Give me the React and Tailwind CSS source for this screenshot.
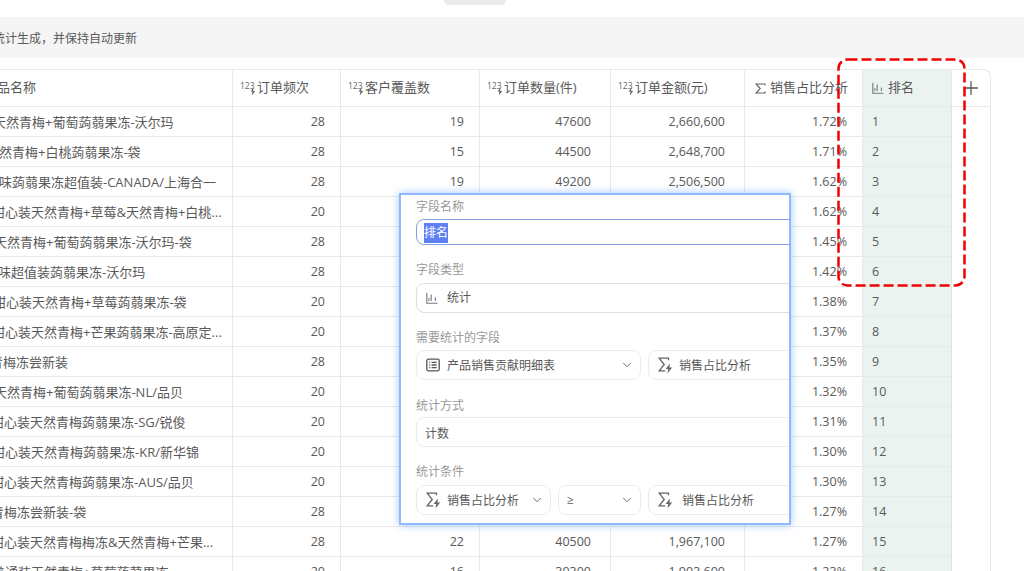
import { ChevronDown, Plus } from 'lucide-react';

const names = [
  ['pl-[33px]', '天然青梅+葡萄蒟蒻果冻-沃尔玛'],
  ['pl-[26px]', '天然青梅+白桃蒟蒻果冻-袋'],
  ['pl-[26px]', '一味蒟蒻果冻超值装-CANADA/上海合一'],
  ['pl-[32px]', '甜心装天然青梅+草莓&天然青梅+白桃...'],
  ['pl-[34px]', '天然青梅+葡萄蒟蒻果冻-沃尔玛-袋'],
  ['pl-[25px]', '一味超值装蒟蒻果冻-沃尔玛'],
  ['pl-[33px]', '甜心装天然青梅+草莓蒟蒻果冻-袋'],
  ['pl-[32px]', '甜心装天然青梅+芒果蒟蒻果冻-高原定...'],
  ['pl-[30px]', '青梅冻尝新装'],
  ['pl-[34px]', '天然青梅+葡萄蒟蒻果冻-NL/品贝'],
  ['pl-[31px]', '甜心装天然青梅蒟蒻果冻-SG/锐俊'],
  ['pl-[32px]', '甜心装天然青梅蒟蒻果冻-KR/新华锦'],
  ['pl-[31px]', '甜心装天然青梅蒟蒻果冻-AUS/品贝'],
  ['pl-[31px]', '青梅冻尝新装-袋'],
  ['pl-[31px]', '甜心装天然青梅梅冻&天然青梅+芒果...'],
  ['pl-[32px]', '普通装天然青梅+草莓蒟蒻果冻'],
];
const freq = [28, 28, 28, 20, 28, 28, 20, 20, 28, 20, 20, 20, 20, 28, 28, 20];
// rows 4-14 of these columns sit behind the dialog
const cover = { 0: 19, 1: 15, 2: 19, 14: 22, 15: 16 };
const qty = { 0: 47600, 1: 44500, 2: 49200, 14: 40500, 15: 39300 };
const amount = { 0: '2,660,600', 1: '2,648,700', 2: '2,506,500', 14: '1,967,100', 15: '1,903,600' };
const share = ['1.72', '1.71', '1.62', '1.62', '1.45', '1.42', '1.38', '1.37', '1.35', '1.32', '1.31', '1.30', '1.30', '1.27', '1.27', '1.23'];

const Bolt = ({ x = 0, y = 0 }) => (
  <path transform={`translate(${x} ${y})`} d="M3 0 0 4h1.9L1.3 8l3.4-4.6H2.7z" fill="currentColor" />
);

const NumIcon = () => (
  <svg width="16" height="16" viewBox="0 0 16 16" className="shrink-0 text-[#666]">
    <text x="0" y="9" fontSize="8.5" fill="currentColor" fontFamily="'Open Sans', sans-serif">123</text>
    <Bolt x={10.5} y={7.5} />
  </svg>
);

const SumIcon = () => (
  <svg width="11" height="11" viewBox="0 0 11 11" fill="none" stroke="#666" strokeWidth="1.2" className="shrink-0">
    <path d="M10 2.6V1H1l4.2 4.5L1 10h9V8.4" />
  </svg>
);

const SumBoltIcon = () => (
  <svg width="15" height="17" viewBox="0 0 15 17" fill="none" className="shrink-0 text-[#666]">
    <path d="M10.5 3.2V1.2H1.2l5 6.3-5 6.3h6" stroke="currentColor" strokeWidth="1.3" />
    <path d="M12 6.5 7.6 12h2.6l-.8 4.5 4.8-6h-2.8z" fill="currentColor" />
  </svg>
);

const ChartIcon = () => (
  <svg width="12" height="12" viewBox="0 0 12 12" fill="none" stroke="#777" strokeWidth="1.1" className="shrink-0">
    <path d="M.8.8v10.5h10.7M5.2 9V2.4M9.4 9V5.4M2.9 9V6" />
  </svg>
);

const TableIcon = () => (
  <svg width="14" height="14" viewBox="0 0 14 14" fill="none" stroke="#555" strokeWidth="1.3" className="shrink-0">
    <rect x=".8" y="1.2" width="12.4" height="11.6" rx="1.5" />
    <path d="M3.2 4.4h1M5.6 4.4h5M3.2 7h1M5.6 7h5M3.2 9.6h1M5.6 9.6h5" />
  </svg>
);

function Head({ width, children, className = '' }) {
  return (
    <div className={`flex h-full shrink-0 items-center border-r border-[#e8e8e8] ${width} ${className}`}>
      {children}
    </div>
  );
}

function Num({ width, pad, children }) {
  return (
    <div className={`flex h-full shrink-0 items-center justify-end border-r border-[#e8e8e8] pt-[2px] text-[12.5px] ${width} ${pad}`}>
      {children}
    </div>
  );
}

function Select({ width, children, chevron, pad = 'pl-[9px]', border = 'border-[#ececec]' }) {
  return (
    <div className={`flex h-[30px] shrink-0 items-center rounded-lg border bg-white ${width} ${pad} ${border}`}>
      {children}
      {chevron && <ChevronDown size={14} strokeWidth={1.6} className="ml-auto mr-[6px] text-[#666]" />}
    </div>
  );
}

const Label = ({ className, children }) => (
  <div className={`h-4 pt-px text-xs leading-4 text-[#999] ${className}`}>{children}</div>
);

export default function App() {
  return (
    <div className="relative h-[571px] w-[1024px] overflow-hidden bg-white font-['Open_Sans','Noto_Sans_CJK_SC',sans-serif] text-[13px] text-[#595959]">
      {/* top tab */}
      <div className="flex h-[17px] justify-center pr-[74px]">
        <div className="h-[5px] w-[62px] rounded-b-md bg-[#ebebeb]" />
      </div>

      {/* banner */}
      <div className="flex h-[41px] items-center overflow-hidden bg-[#f5f5f5] pt-[2px] text-xs">
        <span className="-ml-[7px] whitespace-nowrap">统计生成，并保持自动更新</span>
      </div>

      {/* table */}
      <div className="mt-[11px] -ml-[40px] w-[1031px] rounded-tr-lg border-t border-r border-[#e8e8e8]">
        <div className="flex h-[37px] border-b border-[#e8e8e8]">
          <Head width="w-[273px]" className="pl-[24px]">产品名称</Head>
          <Head width="w-[108px]" className="gap-px pl-[7px]"><NumIcon />订单频次</Head>
          <Head width="w-[139px]" className="gap-px pl-[7px]"><NumIcon />客户覆盖数</Head>
          <Head width="w-[131px]" className="gap-px pl-[7px]"><NumIcon />订单数量(件)</Head>
          <Head width="w-[134px]" className="gap-px pl-[7px]"><NumIcon />订单金额(元)</Head>
          <Head width="w-[118px]" className="gap-[4px] pl-[10px]"><SumIcon />销售占比分析</Head>
          <Head width="w-[89px]" className="gap-[4px] border-[#dde5e2] bg-[#ebf3f0] pl-[9px]"><ChartIcon />排名</Head>
          <div className="flex w-[39px] items-center pl-[8px]">
            <Plus size={22} strokeWidth={1.4} className="text-[#555]" />
          </div>
        </div>

        {names.map(([indent, name], i) => (
          <div key={name} className="flex h-[30px]">
            <div className="flex h-full border-b border-[#e8e8e8]">
              <div className={`flex h-full w-[273px] shrink-0 items-center overflow-hidden whitespace-nowrap border-r border-[#e8e8e8] pt-[2px] ${indent}`}>
                {name}
              </div>
              <Num width="w-[108px]" pad="pr-[15px]">{freq[i]}</Num>
              <Num width="w-[139px]" pad="pr-[15px]">{cover[i]}</Num>
              <Num width="w-[131px]" pad="pr-[19px]">{qty[i]}</Num>
              <Num width="w-[134px]" pad="pr-[19px]">{amount[i]}</Num>
              <Num width="w-[118px]" pad="pr-[15px]">{share[i]}%</Num>
              <div className="flex h-full w-[89px] shrink-0 items-center border-r border-[#dde5e2] bg-[#ebf3f0] pt-[2px] pl-[9px] text-[12.5px]">
                {i + 1}
              </div>
            </div>
          </div>
        ))}
      </div>

      {/* field dialog */}
      <div className="absolute top-[193px] left-[399px] h-[332px] w-[392px] overflow-hidden border-2 border-[#8fb9fb] bg-white pt-[3px] pl-[15px] shadow-[0_0_8px_rgba(100,160,255,0.6)]">
        <Label>字段名称</Label>
        <div className="mt-[5px] flex h-[26px] w-[500px] items-center rounded-lg border border-[#7f9fe3] pt-[2px] pl-[7px] text-xs">
          <span className="bg-[#5f80f5] leading-5 text-white">排名</span>
        </div>

        <Label className="mt-[16px]">字段类型</Label>
        <div className="mt-[6px] flex text-xs">
          <Select width="w-[500px]" border="border-[#dedede]">
            <ChartIcon />
            <span className="ml-[9px]">统计</span>
          </Select>
        </div>

        <Label className="mt-[16px]">需要统计的字段</Label>
        <div className="mt-[5px] flex gap-[7px] pt-0 text-xs">
          <Select width="w-[225px]" chevron>
            <TableIcon />
            <span className="ml-[7px] pt-[2px]">产品销售贡献明细表</span>
          </Select>
          <Select width="w-[200px]">
            <SumBoltIcon />
            <span className="ml-[6px] pt-[2px]">销售占比分析</span>
          </Select>
        </div>

        <Label className="mt-[17px]">统计方式</Label>
        <div className="mt-[4px] flex text-xs">
          <Select width="w-[500px]" pad="pl-[8px] pt-[3px]">计数</Select>
        </div>

        <Label className="mt-[16px]">统计条件</Label>
        <div className="mt-[6px] flex gap-[7px] text-xs">
          <Select width="w-[135px]" chevron>
            <SumBoltIcon />
            <span className="ml-[6px] pt-[2px]">销售占比分析</span>
          </Select>
          <Select width="w-[83px]" chevron pad="pl-[8px]">≥</Select>
          <Select width="w-[200px]">
            <SumBoltIcon />
            <span className="ml-[9px] pt-[2px]">销售占比分析</span>
          </Select>
        </div>
      </div>

      {/* red dashed annotation */}
      <svg width="129" height="229" viewBox="0 0 129 229" fill="none" className="absolute top-[58px] left-[837px]">
        <rect x="1.5" y="1.5" width="126" height="226" rx="9" stroke="#f00000" strokeWidth="2.5" strokeDasharray="10 4" />
      </svg>
    </div>
  );
}
